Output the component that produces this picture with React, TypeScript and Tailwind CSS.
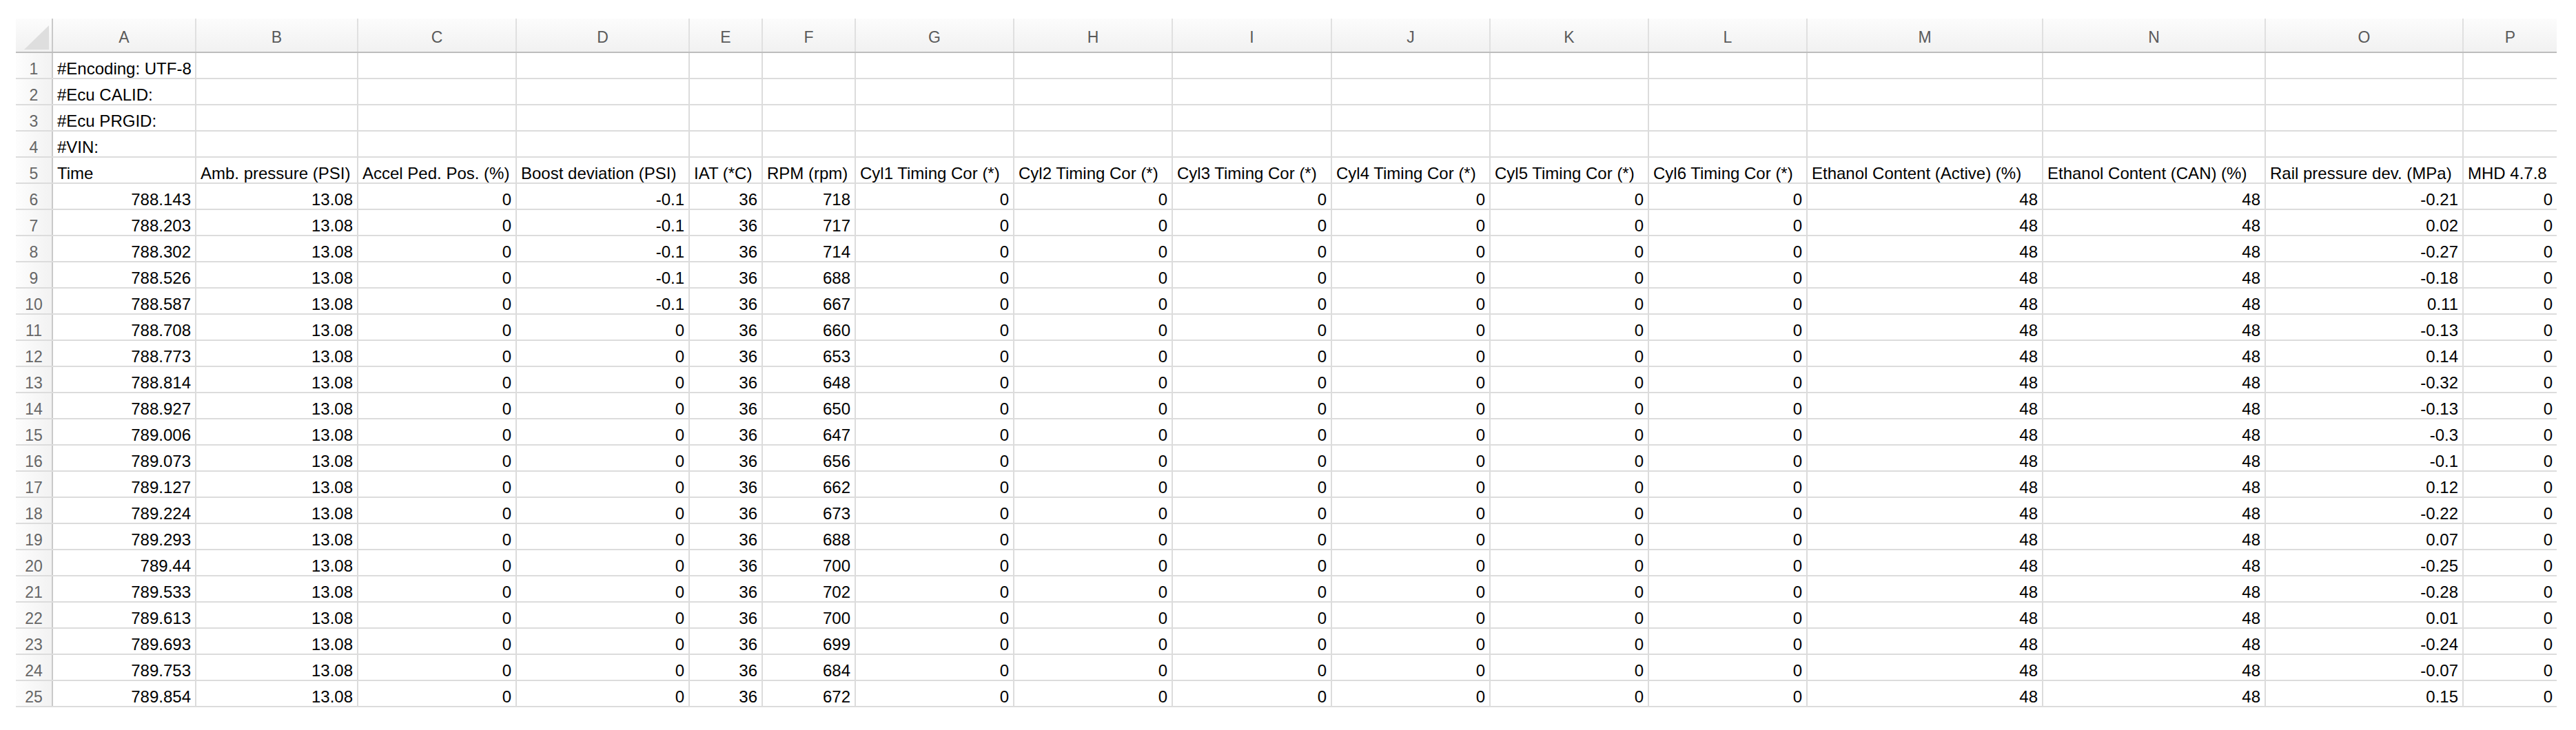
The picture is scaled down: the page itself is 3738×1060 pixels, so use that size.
const columns = [
  { id: 'A', w: 'w-[208px]' },
  { id: 'B', w: 'w-[235px]' },
  { id: 'C', w: 'w-[230px]' },
  { id: 'D', w: 'w-[251px]' },
  { id: 'E', w: 'w-[106px]' },
  { id: 'F', w: 'w-[135px]' },
  { id: 'G', w: 'w-[230px]' },
  { id: 'H', w: 'w-[230px]' },
  { id: 'I', w: 'w-[231px]' },
  { id: 'J', w: 'w-[230px]' },
  { id: 'K', w: 'w-[230px]' },
  { id: 'L', w: 'w-[230px]' },
  { id: 'M', w: 'w-[342px]' },
  { id: 'N', w: 'w-[323px]' },
  { id: 'O', w: 'w-[287px]' },
  { id: 'P', w: 'w-[135px]' },
];

const headers = [
  'Time',
  'Amb. pressure (PSI)',
  'Accel Ped. Pos. (%)',
  'Boost deviation (PSI)',
  'IAT (*C)',
  'RPM (rpm)',
  'Cyl1 Timing Cor (*)',
  'Cyl2 Timing Cor (*)',
  'Cyl3 Timing Cor (*)',
  'Cyl4 Timing Cor (*)',
  'Cyl5 Timing Cor (*)',
  'Cyl6 Timing Cor (*)',
  'Ethanol Content (Active) (%)',
  'Ethanol Content (CAN) (%)',
  'Rail pressure dev. (MPa)',
  'MHD 4.7.8',
];

// time, boost dev, rpm, rail pressure dev
const samples: [string, string, string, string][] = [
  ['788.143', '-0.1', '718', '-0.21'],
  ['788.203', '-0.1', '717', '0.02'],
  ['788.302', '-0.1', '714', '-0.27'],
  ['788.526', '-0.1', '688', '-0.18'],
  ['788.587', '-0.1', '667', '0.11'],
  ['788.708', '0', '660', '-0.13'],
  ['788.773', '0', '653', '0.14'],
  ['788.814', '0', '648', '-0.32'],
  ['788.927', '0', '650', '-0.13'],
  ['789.006', '0', '647', '-0.3'],
  ['789.073', '0', '656', '-0.1'],
  ['789.127', '0', '662', '0.12'],
  ['789.224', '0', '673', '-0.22'],
  ['789.293', '0', '688', '0.07'],
  ['789.44', '0', '700', '-0.25'],
  ['789.533', '0', '702', '-0.28'],
  ['789.613', '0', '700', '0.01'],
  ['789.693', '0', '699', '-0.24'],
  ['789.753', '0', '684', '-0.07'],
  ['789.854', '0', '672', '0.15'],
];

type Cell = { text: string; num?: boolean };

const meta: Cell[][] = [
  [{ text: '#Encoding: UTF-8' }],
  [{ text: '#Ecu CALID:' }],
  [{ text: '#Ecu PRGID:' }],
  [{ text: '#VIN:' }],
  headers.map((h) => ({ text: h })),
];

const dataRows: Cell[][] = samples.map(([t, boost, rpm, rail]) =>
  [t, '13.08', '0', boost, '36', rpm, '0', '0', '0', '0', '0', '0', '48', '48', rail, '0'].map((v) => ({
    text: v,
    num: true,
  }))
);

const rows = [...meta, ...dataRows];

function RowHeader({ n }: { n: number }) {
  return (
    <div className="w-[54px] shrink-0 h-full flex justify-center pt-[11px] bg-linear-to-r from-[#fdfdfd] to-[#f2f2f2] border-r-2 border-[#c9c9c9] text-[23px] leading-[24px] text-[#666666]">
      {n}
    </div>
  );
}

export default function App() {
  return (
    <div className="min-h-screen bg-white pt-[27px] pl-[23px] font-['Liberation_Sans',Arial,sans-serif] text-black">
      {/* column letters */}
      <div className="flex h-[50px] border-b-2 border-[#bdbdbd] w-[3687px] bg-linear-to-b from-[#fcfcfc] to-[#f1f1f1]">
        <div className="w-[54px] shrink-0 h-full border-r-2 border-[#c9c9c9]">
          <svg width="52" height="48" viewBox="0 0 52 48">
            <polygon points="12,45 48,45 48,10" fill="#dedede" />
          </svg>
        </div>
        {columns.map((c, i) => (
          <div
            key={c.id}
            className={`${c.w} shrink-0 h-full flex justify-center pt-[15px] text-[23px] leading-[24px] text-[#5a5a5a] ${
              i < columns.length - 1 ? 'border-r-2 border-[#e0e0e0]' : ''
            }`}
          >
            {c.id}
          </div>
        ))}
      </div>

      {rows.map((cells, r) => (
        <div key={r} className="flex h-[38px] w-[3687px] border-b-2 border-[#dcdcdc]">
          <RowHeader n={r + 1} />
          {columns.map((c, i) => {
            const cell = cells[i];
            return (
              <div
                key={c.id}
                className={`${c.w} shrink-0 h-full flex pt-[11px] px-[6px] text-[24px] leading-[24px] whitespace-nowrap ${
                  cell?.num ? 'justify-end' : 'justify-start'
                } ${i < columns.length - 1 ? 'border-r-2 border-[#dcdcdc]' : ''}`}
              >
                {cell?.text}
              </div>
            );
          })}
        </div>
      ))}
    </div>
  );
}
